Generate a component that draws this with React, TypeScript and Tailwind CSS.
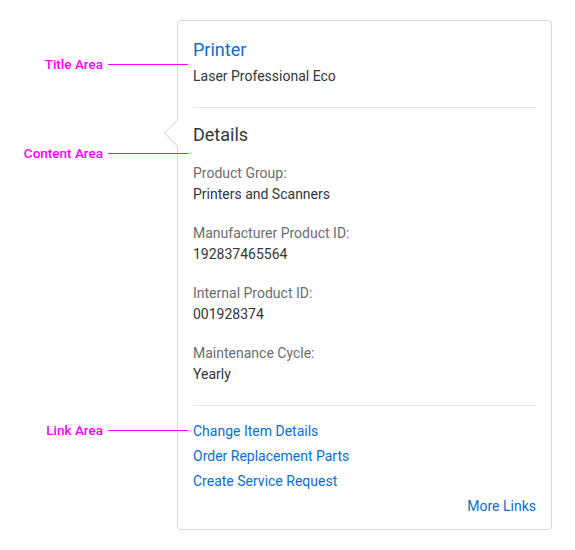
const details = [
  { label: "Product Group:", value: "Printers and Scanners" },
  { label: "Manufacturer Product ID:", value: "192837465564" },
  { label: "Internal Product ID:", value: "001928374" },
  { label: "Maintenance Cycle:", value: "Yearly" },
];

const links = ["Change Item Details", "Order Replacement Parts", "Create Service Request"];

function Callout({ label, top }: { label: string; top: number }) {
  return (
    <div className="absolute left-0 flex w-[188px] items-center" style={{ top }}>
      <span className="w-[108px] pr-[5px] text-right font-['Roboto',sans-serif] text-[13.5px] font-medium leading-[16px] text-[#ff00ff]">
        {label}
      </span>
      <span className="h-px flex-1 bg-[#ff00ff]" />
    </div>
  );
}

export default function App() {
  return (
    <div className="relative h-[550px] w-[575px] bg-white font-['Roboto',sans-serif]">
      <div className="pl-[177px] pt-[20px]">
        <div className="relative h-[510px] w-[375px] rounded-[4px] border border-[#d9d9d9] bg-white px-[15px] pt-[17px]">
          <div className="absolute left-[-10px] top-[102px] h-5 w-5 rotate-45 border-b border-l border-[#d9d9d9] bg-white" />
          <div className="text-[18px] leading-[24px] text-[#0a6ed1]">Printer</div>
          <div className="mt-[4px] text-[14px] leading-[20px] text-[#32363a]">Laser Professional Eco</div>
          <div className="mt-[21px] h-px bg-[#e5e5e5]" />
          <div className="mt-[15px] text-[18px] leading-[24px] text-[#32363a]">Details</div>
          <div className="mt-[16px] flex flex-col gap-[19px]">
            {details.map((d) => (
              <div key={d.label} className="flex flex-col gap-px text-[14px] leading-[20px]">
                <span className="text-[#6a6d70]">{d.label}</span>
                <span className="text-[#32363a]">{d.value}</span>
              </div>
            ))}
          </div>
          <div className="mt-[21px] h-px bg-[#e5e5e5]" />
          <div className="mt-[15px] flex flex-col gap-[5px] text-[14px] leading-[20px] text-[#0a6ed1]">
            {links.map((l) => (
              <span key={l}>{l}</span>
            ))}
            <span className="self-end">More Links</span>
          </div>
        </div>
      </div>
      <Callout label="Title Area" top={56} />
      <Callout label="Content Area" top={145} />
      <Callout label="Link Area" top={422} />
    </div>
  );
}
